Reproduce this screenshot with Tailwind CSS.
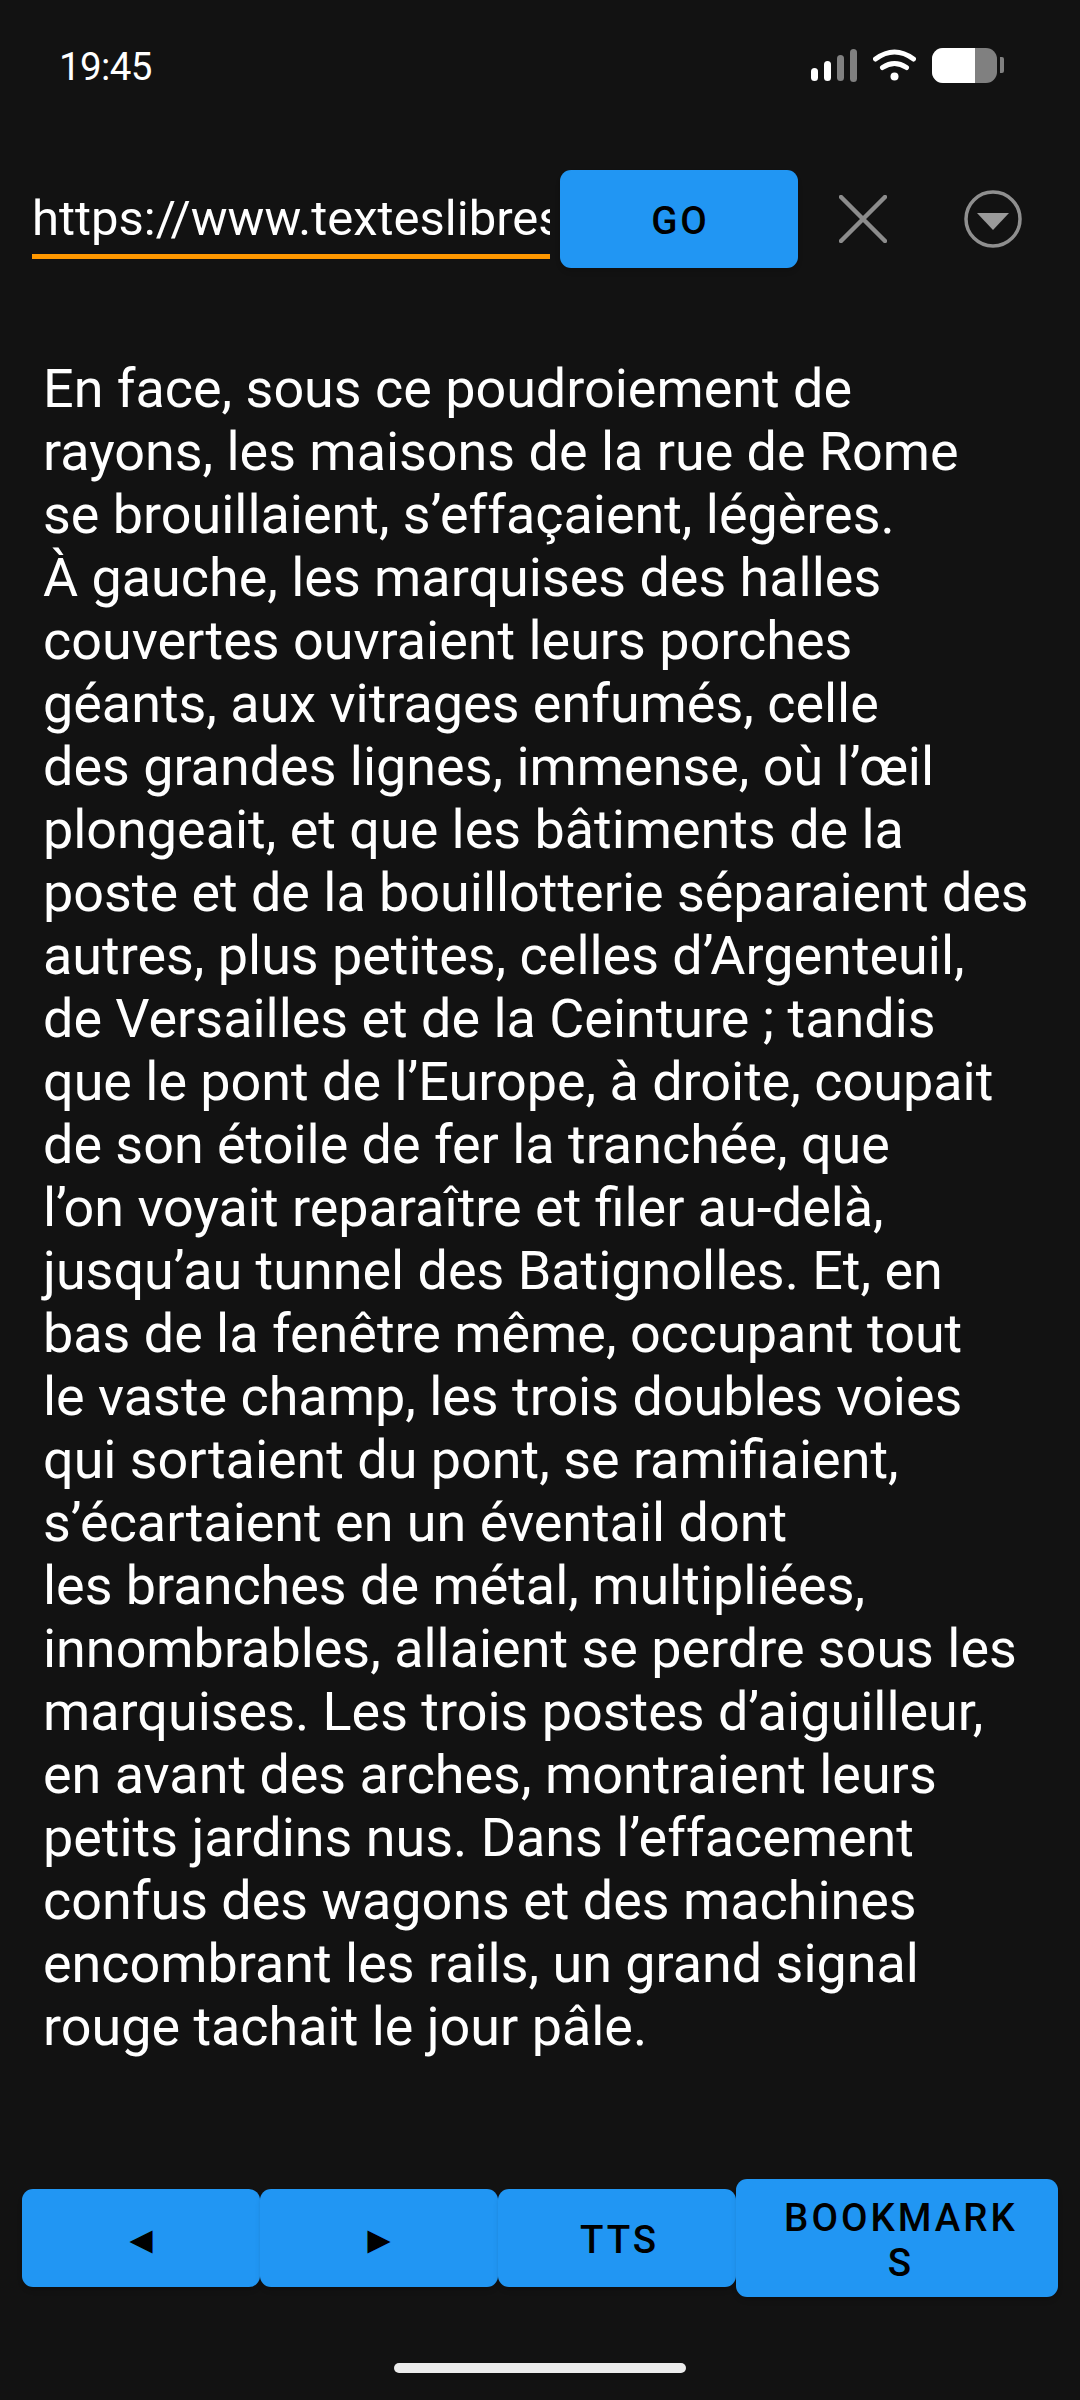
<!DOCTYPE html>
<html lang="fr">
<head>
<meta charset="UTF-8">
<meta name="viewport" content="width=device-width, initial-scale=1.0">
<title>Reader</title>
<script src="https://cdn.jsdelivr.net/npm/@tailwindcss/browser@4"></script>
</head>
<body class="bg-[#121212] font-['Roboto',sans-serif] text-white">
<div class="flex h-[2400px] w-[1080px] flex-col overflow-hidden">
  <!-- status bar -->
  <div class="flex h-[132px] items-center justify-between pb-[2px] pl-[59px] pr-[76px]">
    <span class="mt-[4px] text-[38.5px] leading-none tracking-[-0.6px]">19:45</span>
    <div class="flex items-center">
      <svg class="h-[34px] w-[46px]" viewBox="0 0 46 34">
        <rect x="0" y="20" width="7" height="13" rx="3.5" fill="#fff"/>
        <rect x="13" y="13" width="7" height="20" rx="3.5" fill="#fff"/>
        <rect x="26" y="7" width="7" height="26" rx="3.5" fill="#808080"/>
        <rect x="39" y="1" width="7" height="33" rx="3.5" fill="#808080"/>
      </svg>
      <svg class="ml-[16px] h-[34px] w-[43px]" viewBox="0 0 43 34" fill="none" stroke="#fff" stroke-linecap="round">
        <path d="M2.5 11 Q21.5 -3 40.5 11" stroke-width="5"/>
        <path d="M9.5 19.500 Q21.500 11.500 33.500 19.500" stroke-width="5"/>
        <circle cx="21.500" cy="28.500" r="4" fill="#fff" stroke="none"/>
      </svg>
      <div class="ml-[16px] flex h-[35px] w-[65px] overflow-hidden rounded-[11px] bg-[#808080]">
        <div class="w-[43px] bg-white"></div>
      </div>
      <div class="ml-[3px] h-[16px] w-[4px] rounded-r-[2px] bg-[#808080]"></div>
    </div>
  </div>

  <!-- url row -->
  <div class="mt-[38px] flex h-[98px] items-center pl-[32px]">
    <div class="mb-[9px] h-[80px] w-[518px] self-end border-b-[5px] border-[#ff9800]">
      <input class="h-[75px] w-full bg-transparent pt-[3px] text-[49px] text-white outline-none" value="https://www.texteslibres.org/emile-zola/la-bete-humaine">
    </div>
    <button class="ml-[10px] h-[98px] w-[238px] rounded-[11px] bg-[#2196f3] pl-[3px] pt-[4px] text-[38.5px] font-medium tracking-[3px] text-black shadow-md">GO</button>
    <svg class="ml-[41px] h-[48px] w-[48px]" viewBox="0 0 48 48" stroke="#8c8c8c" stroke-width="4.500" stroke-linecap="round">
      <path d="M2 2 L46 46 M46 2 L2 46"/>
    </svg>
    <svg class="ml-[77px] h-[58px] w-[58px]" viewBox="0 0 58 58">
      <circle cx="29" cy="29" r="27" fill="none" stroke="#8f8f8f" stroke-width="3.500"/>
      <path d="M13 23 H45 L29 40 Z" fill="#9a9a9a"/>
    </svg>
  </div>

  <!-- chapter text -->
  <div class="mt-[89px] flex-1 pl-[43px] text-[53.9px] leading-[63px] whitespace-nowrap">
    En face, sous ce poudroiement de<br>
    rayons, les maisons de la rue de Rome<br>
    se brouillaient, s’effaçaient, légères.<br>
    À gauche, les marquises des halles<br>
    couvertes ouvraient leurs porches<br>
    géants, aux vitrages enfumés, celle<br>
    des grandes lignes, immense, où l’œil<br>
    plongeait, et que les bâtiments de la<br>
    poste et de la bouillotterie séparaient des<br>
    autres, plus petites, celles d’Argenteuil,<br>
    de Versailles et de la Ceinture ; tandis<br>
    que le pont de l’Europe, à droite, coupait<br>
    de son étoile de fer la tranchée, que<br>
    l’on voyait reparaître et filer au-delà,<br>
    jusqu’au tunnel des Batignolles. Et, en<br>
    bas de la fenêtre même, occupant tout<br>
    le vaste champ, les trois doubles voies<br>
    qui sortaient du pont, se ramifiaient,<br>
    s’écartaient en un éventail dont<br>
    les branches de métal, multipliées,<br>
    innombrables, allaient se perdre sous les<br>
    marquises. Les trois postes d’aiguilleur,<br>
    en avant des arches, montraient leurs<br>
    petits jardins nus. Dans l’effacement<br>
    confus des wagons et des machines<br>
    encombrant les rails, un grand signal<br>
    rouge tachait le jour pâle.
  </div>

  <!-- bottom buttons -->
  <div class="flex items-center pl-[22px] text-[38.5px] font-medium tracking-[3px] text-black">
    <button class="h-[98px] w-[238px] rounded-[11px] bg-[#2196f3] pl-[3px] pt-[4px] shadow-md">◄</button>
    <button class="h-[98px] w-[238px] rounded-[11px] bg-[#2196f3] pl-[3px] pt-[4px] shadow-md">►</button>
    <button class="h-[98px] w-[238px] rounded-[11px] bg-[#2196f3] pl-[5px] pt-[4px] shadow-md">TTS</button>
    <button class="h-[118px] w-[322px] rounded-[11px] bg-[#2196f3] pl-[40px] pr-[32px] pt-[3px] leading-[45px] break-all shadow-md">BOOKMARKS</button>
  </div>

  <!-- home indicator -->
  <div class="flex h-[103px] items-start justify-center pt-[66px]">
    <div class="h-[10px] w-[292px] rounded-full bg-[#ececec]"></div>
  </div>
</div>
</body>
</html>
